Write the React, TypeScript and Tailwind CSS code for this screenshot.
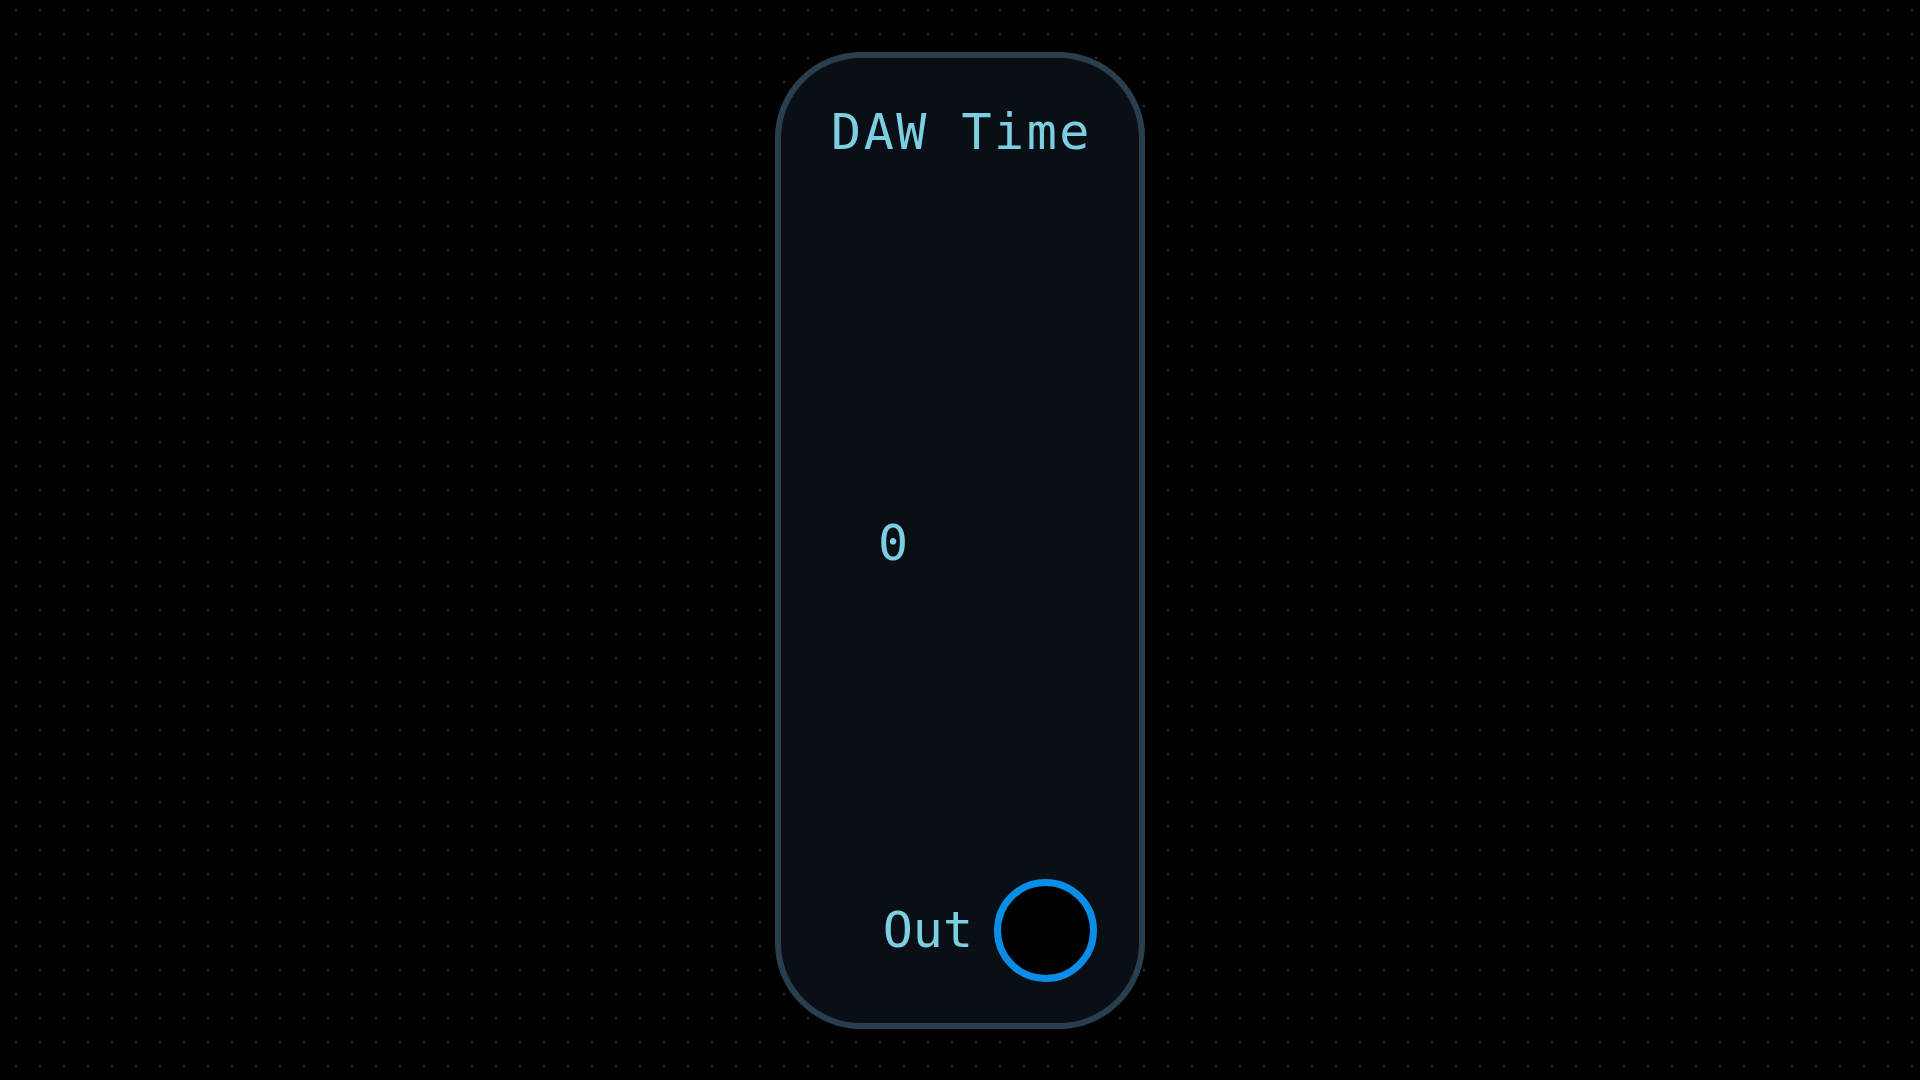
import React from "react";

export default function App() {
  return (
    <div
      className="w-[1920px] h-[1080px] bg-black bg-[radial-gradient(circle,#22394a_1px,transparent_1.2px)] bg-[size:24px_24px] bg-[position:4px_-2px] flex items-center justify-center"
      style={{ fontFamily: '"DejaVu Sans Mono", "Liberation Mono", monospace' }}
    >
      <div className="w-[370px] h-[977px] rounded-[86px] border-[6px] border-[#2a3f4e] bg-[rgba(11,16,23,0.9)] flex flex-col pt-[49px] pb-[41px]">
        <div className="text-[50px] leading-none text-[#7ccfe0] text-center tracking-[2.5px] pl-[3px]">
          DAW Time
        </div>
        <div className="flex-1 flex items-center pt-[50px] pl-[97px]">
          <span className="text-[50px] leading-none text-[#7ccfe0]">0</span>
        </div>
        <div className="flex items-center justify-end pr-[42px] gap-[21px]">
          <span className="text-[50px] leading-none text-[#7ccfe0]">Out</span>
          <div className="w-[103px] h-[103px] rounded-full border-[7px] border-[#0a8de6] bg-black" />
        </div>
      </div>
    </div>
  );
}
